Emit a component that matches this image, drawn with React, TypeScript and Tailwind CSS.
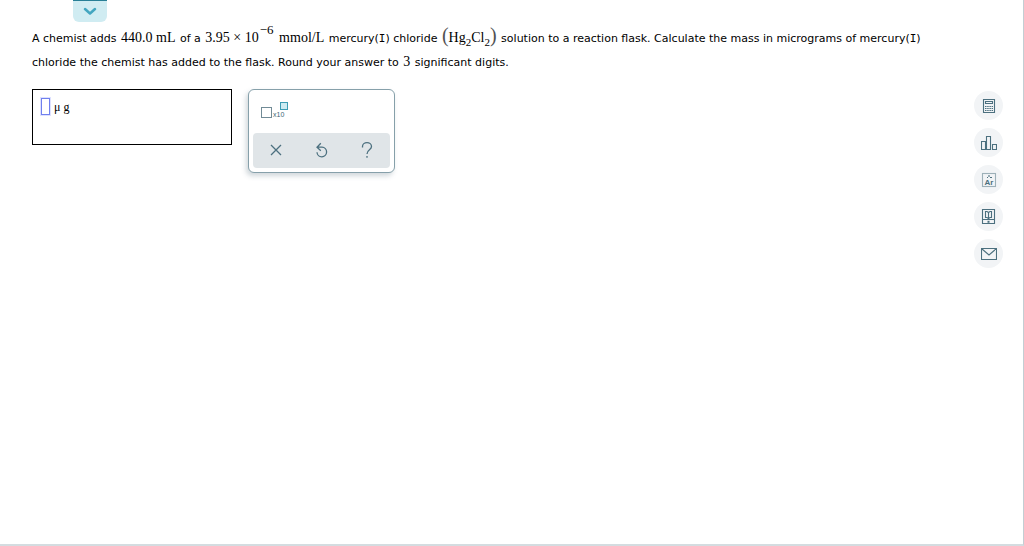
import type { ReactNode } from 'react';

function Chem({ children }: { children: ReactNode }) {
  return (
    <span className="mx-px whitespace-nowrap font-['Liberation_Serif',serif] text-[14px] leading-none">{children}</span>
  );
}

function Sub({ children }: { children: ReactNode }) {
  return <sub className="-bottom-1 text-[11px] leading-none">{children}</sub>;
}

function Paren({ children }: { children: ReactNode }) {
  return <span className="text-[20px] leading-none text-neutral-600">{children}</span>;
}

function Mercury() {
  return (
    <>
      mercury(<span className="font-['DejaVu_Sans_Mono',monospace] leading-none">I</span>)
    </>
  );
}

function Question() {
  return (
    <p className="text-[11px] leading-6 text-black">
      A chemist adds <Chem>440.0 mL</Chem> of a{' '}
      <Chem>
        3.95 × 10<sup className="-top-2 ml-px text-[13px] leading-none">−6</sup>
      </Chem>{' '}
      <Chem>mmol/L</Chem> <Mercury /> chloride{' '}
      <Chem>
        <Paren>(</Paren>
        Hg<Sub>2</Sub>Cl<Sub>2</Sub>
        <Paren>)</Paren>
      </Chem>{' '}
      solution to a reaction flask. Calculate the mass in micrograms of <Mercury /> chloride the chemist has added to the
      flask. Round your answer to <Chem>3</Chem> significant digits.
    </p>
  );
}

function AnswerBox() {
  return (
    <div className="flex h-14 w-[200px] items-start gap-1 border border-black px-2 pt-2">
      <input
        aria-label="Answer in micrograms"
        className="h-[17px] w-[9px] border border-[#7080ee] bg-white text-[12px] outline-none ring-1 ring-[#dde1ff]"
      />
      <span className="font-['Liberation_Serif',serif] text-[12px] leading-[18px]">μ g</span>
    </div>
  );
}

function Palette() {
  const tool = 'flex h-full flex-1 items-center justify-center pb-px';
  return (
    <div className="flex h-[84px] w-[147px] flex-col justify-between rounded-md border border-[#86a0aa] bg-white p-1 shadow-[-2px_3px_5px_rgba(70,100,115,0.25)]">
      <button type="button" aria-label="Scientific notation" className="ml-2 mt-2 h-5 w-7">
        <svg width="28" height="20" viewBox="0 0 28 20" fill="none">
          <rect x="0.5" y="5.5" width="10" height="10" stroke="#718b96" />
          <rect x="19.5" y="0.5" width="7" height="7" fill="#cdebf2" stroke="#3d9db5" />
          <text x="12" y="15" fontSize="7" fontFamily="Liberation Sans, sans-serif" fill="#426775">
            x10
          </text>
        </svg>
      </button>
      <div className="flex h-[35px] rounded-sm bg-[#e0e5e8]">
        <button type="button" aria-label="Clear" className={tool}>
          <svg width="12" height="12" viewBox="0 0 12 12" stroke="#4c707f" strokeWidth="1.3">
            <path d="M1 1l10 10M11 1L1 11" />
          </svg>
        </button>
        <button type="button" aria-label="Undo" className={tool}>
          <svg width="14" height="16" viewBox="0 0 14 16" fill="none" stroke="#4c707f" strokeWidth="1.3">
            <path d="M2 5.2H7A4.8 4.8 0 1 1 2 10.2M5.8 1.2L2 5.2L5.8 8.8" />
          </svg>
        </button>
        <button type="button" aria-label="Help" className={tool}>
          <svg width="12" height="16" viewBox="0 0 12 16" fill="none" stroke="#4c707f" strokeWidth="1.3">
            <path d="M1.5 5.5V4.5A4.5 3.8 0 0 1 10.5 4.5C10.5 8 6 7.5 6 12M6 14V15.8" />
          </svg>
        </button>
      </div>
    </div>
  );
}

const resources = [
  {
    label: 'Calculator',
    art: (
      <>
        <path d="M2.5 1.5h11v13h-11zM4.5 3.5h7v2h-7z" />
        <path d="M4 8.5h8M4 10.5h8M4 12.5h8" strokeDasharray="1.5 .7" />
      </>
    ),
  },
  { label: 'Data', art: <path d="M.5 6.5h4v8h-4zM5.5 1.5h4v13h-4zM11.5 9.5h4v5h-4z" /> },
  {
    label: 'Periodic table',
    art: (
      <>
        <rect x="1.5" y="1.5" width="13" height="13" stroke="#9db0b8" />
        <path d="M6 5.5h1M9 5.5h2M8 3v2" />
        <text x="8" y="13" textAnchor="middle" fontSize="8" fontWeight="bold" fontFamily="Liberation Sans, sans-serif" fill="#4c707f" stroke="none">
          Ar
        </text>
      </>
    ),
  },
  {
    label: 'Textbook',
    art: (
      <>
        <path d="M1.5 .5h12v14h-12zM2 10.5h11M7.5 3.5v5.5M4.5 2.5h1.5l1.5 1l1.5-1h1.5v6h-1.5l-1.5 1l-1.5-1h-1.5z" />
        <path d="M6.5 12.8h2" strokeWidth="2" />
      </>
    ),
  },
  { label: 'Message', art: <path d="M.5 2.5h15v11H.5zM1 3l7 6l7-6" /> },
];

function Resources() {
  return (
    <nav aria-label="Resources" className="flex shrink-0 flex-col gap-2">
      {resources.map(({ label, art }) => (
        <button key={label} type="button" aria-label={label} className="flex size-[29px] items-center justify-center rounded-full bg-[#f2f4f6]">
          <svg width="16" height="16" viewBox="0 0 16 16" fill="none" stroke="#4c707f" strokeWidth="1.1">
            {art}
          </svg>
        </button>
      ))}
    </nav>
  );
}

export default function App() {
  return (
    <div className="flex min-h-screen flex-col border-b-2 border-r border-b-[#d4dce0] border-r-[#c3ced3] bg-white font-['DejaVu_Sans',Verdana,sans-serif]">
      <button type="button" aria-label="Show more" className="ml-[73px] flex h-[22px] w-[34px] items-center justify-center rounded-b-md border-t border-[#287f96] bg-[#d0ecf2]">
        <svg width="14" height="9" viewBox="0 0 14 9" fill="none" stroke="#43a6c0" strokeWidth="2.5" strokeLinecap="round" strokeLinejoin="round">
          <path d="M2 2l5 4.5L12 2" />
        </svg>
      </button>
      <main className="flex flex-col pl-8 pr-5 pt-[3px]">
        <div className="pr-10">
          <Question />
        </div>
        <div className="flex justify-between pt-[14px]">
          <div className="flex items-start gap-4">
            <AnswerBox />
            <Palette />
          </div>
          <div className="pt-0.5">
            <Resources />
          </div>
        </div>
      </main>
    </div>
  );
}
